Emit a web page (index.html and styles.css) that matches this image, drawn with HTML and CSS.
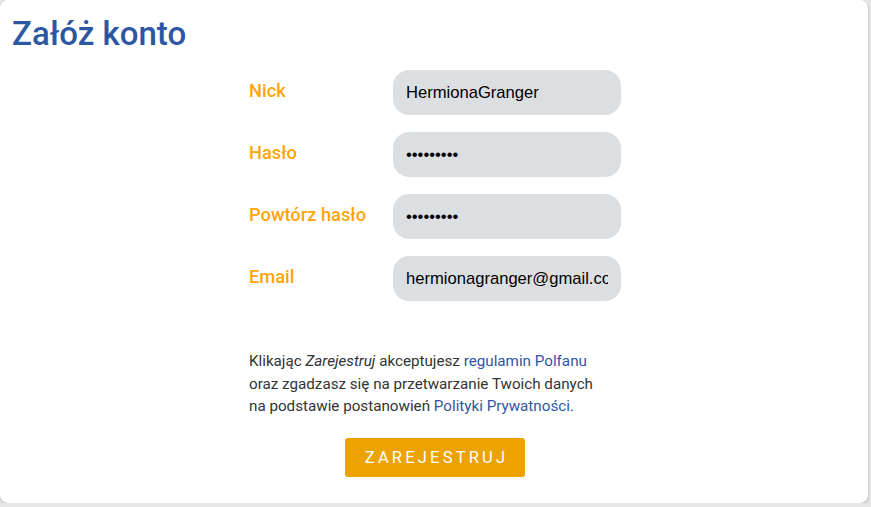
FILE: index.html
```
<!DOCTYPE html>
<html lang="pl">
<head>
<meta charset="utf-8">
<title>Załóż konto</title>
<link rel="stylesheet" href="styles.css">
</head>
<body>
<div class="card">
	<h1>Załóż konto</h1>
	<form class="register">
		<div class="fields">
			<label for="nick">Nick</label>
			<input id="nick" type="text" value="HermionaGranger">
			<label for="pass">Hasło</label>
			<input id="pass" type="password" value="123456789">
			<label for="pass2">Powtórz hasło</label>
			<input id="pass2" type="password" value="123456789">
			<label for="email">Email</label>
			<input id="email" type="text" value="hermionagranger@gmail.com">
		</div>
		<p class="terms">Klikając <i>Zarejestruj</i> akceptujesz <a href="#">regulamin Polfanu</a><br>
		oraz zgadzasz się na przetwarzanie Twoich danych<br>
		na podstawie postanowień <a href="#">Polityki Prywatności</a>.</p>
		<div class="actions">
			<button type="button">Zarejestruj</button>
		</div>
	</form>
</div>
</body>
</html>
```
FILE: styles.css
```
html, body {
	margin: 0;
	background: #e6e6e6;
}

.card {
	width: 868px;
	height: 503px;
	box-sizing: border-box;
	background: #fff;
	border-radius: 8px;
	box-shadow: 0 1px 3px rgba(0, 0, 0, 0.25);
	padding: 12px 11px 12px 13px;
	font-family: Roboto, sans-serif;
}

h1 {
	margin: 0 0 0 -1px;
	font-size: 33px;
	font-weight: 500;
	line-height: 44px;
	color: #2c57a3;
}

.register {
	width: 372px;
	margin: 14px auto 0;
}

.fields {
	display: grid;
	grid-template-columns: 144px 228px;
	row-gap: 17px;
	align-items: center;
}

label {
	color: #ffa50a;
	font-size: 18.3px;
	font-weight: 500;
	padding-bottom: 4px;
}

input {
	height: 45px;
	box-sizing: border-box;
	border: none;
	border-radius: 16px;
	background: #dcdfe2;
	padding: 0 13px;
	font-family: "Liberation Sans", Arial, sans-serif;
	font-size: 16.6px;
	color: #000;
	outline: none;
}

.terms {
	margin: 49px 0 0;
	font-size: 15.2px;
	line-height: 22.5px;
	color: #333;
}

.terms a {
	color: #2f56a2;
	text-decoration: none;
}

.actions {
	display: flex;
	justify-content: center;
	margin-top: 20px;
}

button {
	width: 180px;
	height: 39px;
	border: none;
	border-radius: 3px;
	background: #eca200;
	color: #fff;
	font-family: Roboto, sans-serif;
	font-size: 16.5px;
	letter-spacing: 3.2px;
	text-transform: uppercase;
	padding: 0 0 0 3px;
}
```
